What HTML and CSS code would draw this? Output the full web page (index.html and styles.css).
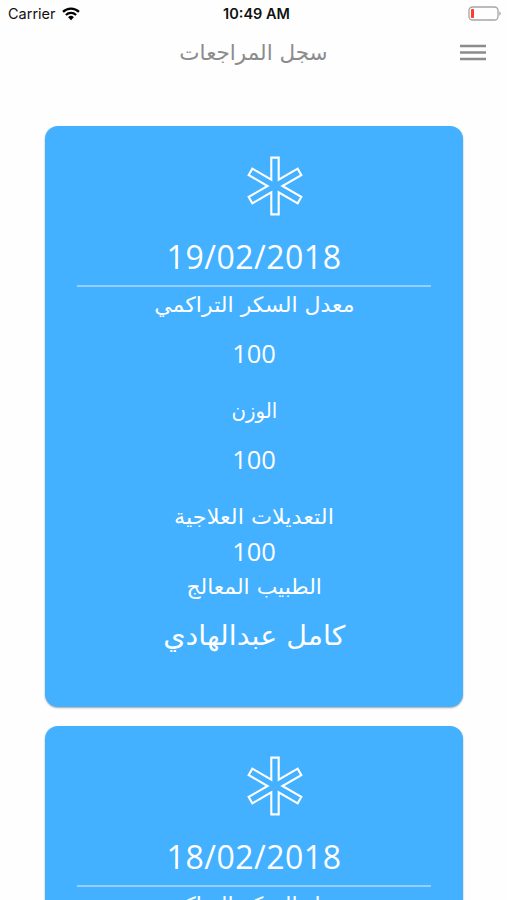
FILE: index.html
```html
<!DOCTYPE html>
<html lang="ar">
<head>
  <meta charset="UTF-8">
  <meta name="viewport" content="width=device-width, initial-scale=1.0">
  <title>سجل المراجعات</title>
  <link rel="stylesheet" href="styles.css">
</head>
<body>

<div class="status-bar">
  <div class="carrier">
    <span>Carrier</span>
    <svg class="wifi" width="18" height="14" viewBox="0 0 18 14">
      <path d="M1 4.8 A11.5 11.5 0 0 1 17 4.8" fill="none" stroke="#000" stroke-width="2.3"/>
      <path d="M3.9 8 A7.4 7.4 0 0 1 14.1 8" fill="none" stroke="#000" stroke-width="2.2"/>
      <path d="M9 13.2 L6.1 10.2 A4.2 4.2 0 0 1 11.9 10.2 Z"/>
    </svg>
  </div>
  <div class="time">10:49 AM</div>
  <svg class="battery" width="33" height="15" viewBox="0 0 33 15">
    <rect x="1" y="1" width="29" height="13" rx="3.5" fill="none" stroke="#a5a5a5" stroke-width="1.3"/>
    <rect x="3" y="3" width="3" height="9" rx="0.8" fill="#ff3b30"/>
    <path d="M31.3 5.2 Q32.8 6 32.8 7.5 Q32.8 9 31.3 9.8 Z" fill="#a5a5a5"/>
  </svg>
</div>

<header class="header">
  <h1 class="title" dir="rtl">سجل المراجعات</h1>
  <button class="menu" aria-label="القائمة">
    <svg width="26" height="17" viewBox="0 0 26 17">
      <path d="M0 2 H26 M0 8.5 H26 M0 15 H26"/>
    </svg>
  </button>
</header>

<main class="cards">
  <section class="card">
    <svg class="asterisk" width="60" height="62" viewBox="-30 -31 60 62">
      <path d="M-3.7 -28.4 H3.7 V-6.4 L22.65 -17.35 L26.35 -10.95 L7.4 0 L26.35 10.95 L22.65 17.35 L3.7 6.4 V28.4 H-3.7 V6.4 L-22.65 17.35 L-26.35 10.95 L-7.4 0 L-26.35 -10.95 L-22.65 -17.35 L-3.7 -6.4 Z"/>
    </svg>
    <div class="date">19/02/2018</div>
    <div class="label label-sugar" dir="rtl"><span>معدل السكر التراكمي</span></div>
    <div class="value">100</div>
    <div class="label label-weight" dir="rtl"><span>الوزن</span></div>
    <div class="value">100</div>
    <div class="label label-changes" dir="rtl"><span>التعديلات العلاجية</span></div>
    <div class="value value-tight">100</div>
    <div class="label label-doctor" dir="rtl"><span>الطبيب المعالج</span></div>
    <div class="doctor" dir="rtl"><span>كامل عبدالهادي</span></div>
  </section>

  <section class="card">
    <svg class="asterisk" width="60" height="62" viewBox="-30 -31 60 62">
      <path d="M-3.7 -28.4 H3.7 V-6.4 L22.65 -17.35 L26.35 -10.95 L7.4 0 L26.35 10.95 L22.65 17.35 L3.7 6.4 V28.4 H-3.7 V6.4 L-22.65 17.35 L-26.35 10.95 L-7.4 0 L-26.35 -10.95 L-22.65 -17.35 L-3.7 -6.4 Z"/>
    </svg>
    <div class="date">18/02/2018</div>
    <div class="label label-sugar" dir="rtl"><span>معدل السكر التراكمي</span></div>
  </section>
</main>

</body>
</html>
```

FILE: styles.css
```css
* {
  box-sizing: border-box;
}

body {
  margin: 0;
  height: 900px;
  overflow: hidden;
  background-color: #fefefe;
  font-family: 'Open Sans', 'DejaVu Sans', sans-serif;
}

/* Status bar */
.status-bar {
  display: grid;
  grid-template-columns: 1fr auto 1fr;
  align-items: center;
  height: 27px;
  padding: 0 6px 0 8px;
  font-family: Inter, sans-serif;
  font-size: 14.5px;
  color: #111;
}

.carrier {
  display: flex;
  align-items: center;
  gap: 6px;
}

.time {
  padding-left: 4px;
  font-weight: 600;
}

.battery {
  justify-self: end;
}

/* Header */
.header {
  display: grid;
  grid-template-columns: 1fr auto 1fr;
  align-items: center;
  height: 50px;
  padding: 0 21px;
}

.title {
  grid-column: 2;
  margin: 0;
  font-family: 'DejaVu Sans', sans-serif;
  font-size: 21.5px;
  font-weight: normal;
  color: #8c8c8c;
}

.menu {
  display: flex;
  justify-self: end;
  padding: 0;
  border: 0;
  background: none;
}

.menu path {
  stroke: #8c8c8c;
  stroke-width: 2.3;
}

/* Cards */
.cards {
  display: flex;
  flex-direction: column;
  gap: 19px;
  padding: 49px 44px 0 45px;
}

.card {
  display: flex;
  flex-direction: column;
  align-items: center;
  flex: none;
  height: 581px;
  padding: 29px 32px 0;
  border-radius: 13px;
  background-color: #43b1ff;
  box-shadow: 0 1px 2px rgba(0, 0, 0, 0.35);
  color: #fff;
}

.asterisk {
  flex: none;
  margin-left: 42px;
  fill: none;
  stroke: #fff;
  stroke-width: 2.1;
}

.date {
  width: 100%;
  height: 70px;
  padding-top: 17px;
  border-bottom: 2px solid #92d0ff;
  font-size: 32px;
  line-height: 46px;
  letter-spacing: 0.5px;
  text-align: center;
}

.label,
.doctor {
  font-family: 'DejaVu Sans', sans-serif;
  font-size: 21px;
  line-height: 36px;
  white-space: nowrap;
}

.label span,
.doctor span {
  display: inline-block;
}

.label-sugar span {
  transform: scaleX(1.05);
}

.label-weight span {
  transform: scaleX(0.94);
}

.label-changes span {
  transform: scaleX(1.065);
}

.label-doctor span {
  transform: scaleX(1.04);
}

.value {
  height: 70px;
  padding-top: 12px;
  font-size: 25.5px;
  line-height: 36px;
}

.value-tight {
  height: 34px;
  padding-top: 0;
  line-height: 32px;
}

.doctor {
  padding-top: 13px;
  font-size: 27px;
}

.doctor span {
  transform: scaleX(1.055);
}
```
